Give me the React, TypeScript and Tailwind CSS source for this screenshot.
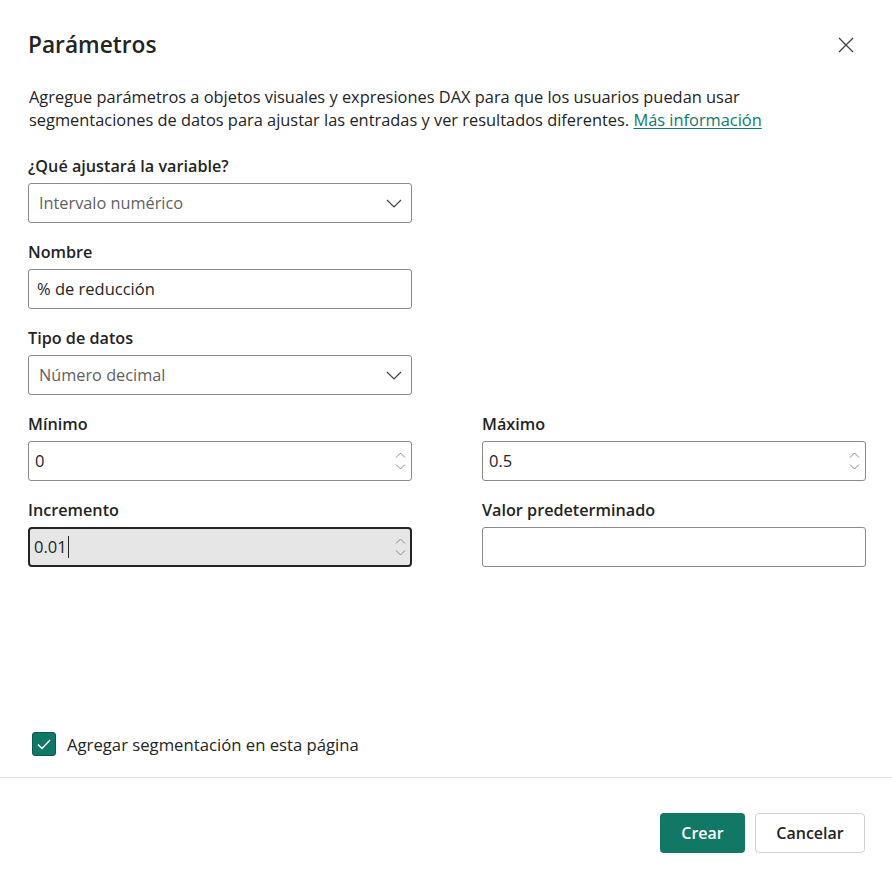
import React from "react";

function Chevron() {
  return (
    <svg width="16" height="9" viewBox="0 0 16 9" fill="none" className="shrink-0">
      <path d="M1 1l7 7 7-7" stroke="#424242" strokeWidth="1.2" />
    </svg>
  );
}

function Spinner() {
  return (
    <div className="flex flex-col gap-[6px] items-center">
      <svg width="11" height="6" viewBox="0 0 11 6" fill="none">
        <path d="M1 5.5l4.5-4.5 4.5 4.5" stroke="#8a8a8a" strokeWidth="1" />
      </svg>
      <svg width="11" height="6" viewBox="0 0 11 6" fill="none">
        <path d="M1 0.5l4.5 4.5 4.5-4.5" stroke="#8a8a8a" strokeWidth="1" />
      </svg>
    </div>
  );
}

function Label({ children }: { children: React.ReactNode }) {
  return <div className="text-[16.2px] leading-[22px] font-semibold text-[#242424] mb-[6px]">{children}</div>;
}

function SelectBox({ value }: { value: string }) {
  return (
    <div className="h-10 w-[384px] border border-[#8a8a8a] rounded-[3px] flex items-center justify-between pl-[10px] pr-[9px]">
      <span className="text-[16.3px] text-[#616161]">{value}</span>
      <Chevron />
    </div>
  );
}

function TextBox({ value }: { value: string }) {
  return (
    <div className="h-10 w-[384px] border border-[#8a8a8a] rounded-[3px] flex items-center pl-[8px]">
      <span className="text-[16.5px] text-[#242424]">{value}</span>
    </div>
  );
}

function NumberBox({ value }: { value: string }) {
  return (
    <div className="h-10 w-[384px] border border-[#8a8a8a] rounded-[3px] flex items-center justify-between pl-[6px] pr-[5px]">
      <span className="text-[16.5px] text-[#242424]">{value}</span>
      <Spinner />
    </div>
  );
}

export default function App() {
  return (
    <div
      className="w-[892px] h-[877px] bg-white flex flex-col text-[#242424]"
      style={{ fontFamily: '"Open Sans", "Noto Sans", sans-serif' }}
    >
      <div className="px-[28px] pt-[28px]">
        <div className="flex items-center justify-between">
          <h1 className="text-[22.7px] leading-[34px] font-semibold text-[#242424]">Parámetros</h1>
          <button className="mr-[8px] p-[2px]">
            <svg width="16" height="16" viewBox="0 0 16 16" fill="none">
              <path d="M1 1l14 14M15 1L1 15" stroke="#424242" strokeWidth="1.3" />
            </svg>
          </button>
        </div>

        <p className="mt-[23px] text-[16.4px] leading-[23px] text-[#242424] pl-[1px] whitespace-nowrap">
          Agregue parámetros a objetos visuales y expresiones DAX para que los usuarios puedan usar
          <br />
          segmentaciones de datos para ajustar las entradas y ver resultados diferentes.{" "}
          <a className="text-[#0e7a6b] underline underline-offset-2">Más información</a>
        </p>

        <div className="mt-[24px] flex flex-col gap-[18px]">
          <div>
            <Label>¿Qué ajustará la variable?</Label>
            <SelectBox value="Intervalo numérico" />
          </div>
          <div>
            <Label>Nombre</Label>
            <TextBox value="% de reducción" />
          </div>
          <div>
            <Label>Tipo de datos</Label>
            <SelectBox value="Número decimal" />
          </div>
          <div className="grid grid-cols-[384px_384px] gap-x-[70px] gap-y-[18px]">
            <div>
              <Label>Mínimo</Label>
              <NumberBox value="0" />
            </div>
            <div>
              <Label>Máximo</Label>
              <NumberBox value="0.5" />
            </div>
            <div>
              <Label>Incremento</Label>
              <div className="h-10 w-[384px] border-2 border-[#242424] bg-[#e6e6e6] rounded-[4px] flex items-center justify-between pl-[4px] pr-[4px]">
                <span className="text-[16.5px] text-[#242424] flex items-center">
                  0.01<span className="inline-block w-px h-[22px] bg-[#242424] ml-px" />
                </span>
                <Spinner />
              </div>
            </div>
            <div>
              <Label>Valor predeterminado</Label>
              <TextBox value="" />
            </div>
          </div>
        </div>
      </div>

      <div className="flex-1" />

      <div className="px-[32px] pb-[20px] flex items-center gap-[11px]">
        <div className="w-6 h-6 bg-[#117865] border border-[#0c5a4c] rounded-[3px] flex items-center justify-center">
          <svg width="14" height="11" viewBox="0 0 14 11" fill="none">
            <path d="M1 5.5l4 4 8-8.5" stroke="white" strokeWidth="1.5" />
          </svg>
        </div>
        <span className="text-[16.7px] text-[#242424]">Agregar segmentación en esta página</span>
      </div>

      <div className="border-t border-[#e0e0e0] px-[27px] pt-[35px] pb-[24px] flex justify-end gap-[10px]">
        <button className="h-10 w-[85px] rounded-[4px] bg-[#117865] text-white text-[16px] font-semibold">Crear</button>
        <button className="h-10 w-[110px] rounded-[4px] bg-white border border-[#d1d1d1] text-[#242424] text-[16px] font-semibold">
          Cancelar
        </button>
      </div>
    </div>
  );
}
